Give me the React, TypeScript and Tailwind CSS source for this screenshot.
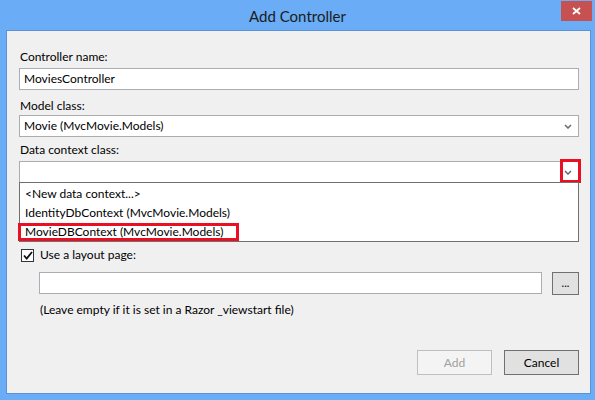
import React from "react";

const font = { fontFamily: 'Lato, "Noto Sans", sans-serif' };

const Chevron = () => (
  <svg width="8" height="5" viewBox="0 0 8 5" className="block">
    <path d="M1 1 L4 4 L7 1" fill="none" stroke="#6a6a6a" strokeWidth="1.5" />
  </svg>
);

const TextBox = ({ value, className = "" }: { value?: string; className?: string }) => (
  <div
    className={`h-[22px] border border-[#abadb3] bg-white pl-[4px] flex items-center text-[12px] text-[#000] ${className}`}
  >
    {value}
  </div>
);

const Select = ({ value }: { value?: string }) => (
  <div className="h-[22px] border border-[#acacac] bg-white pl-[4px] pr-[6px] flex items-center justify-between text-[12px] text-black">
    <span>{value}</span>
    <Chevron />
  </div>
);

export default function App() {
  return (
    <div
      className="w-[595px] h-[400px] bg-[#6aacf5] flex flex-col overflow-hidden select-none"
      style={font}
    >
      {/* title bar */}
      <div className="relative h-[30px] shrink-0 flex items-center justify-center">
        <span className="text-[15px] text-[#1b1b1b] mt-[3px]">Add Controller</span>
        <div className="absolute right-[3px] top-[1px] w-[31px] h-[20px] bg-[#c75050] flex items-center justify-center">
          <svg width="9" height="8" viewBox="0 0 9 8">
            <path d="M1 1 L8 7 M8 1 L1 7" stroke="#fff" strokeWidth="1.8" />
          </svg>
        </div>
      </div>

      {/* client area */}
      <div className="relative ml-[6px] mr-[4px] h-[364px] border border-[#5b92d6] bg-[#f0f0f0] pl-[12px] pr-[11px] pt-[18px] text-[12px] text-black leading-[16px]">
        <div className="pl-[1px]">Controller name:</div>
        <TextBox value="MoviesController" className="mt-[3px]" />

        <div className="pl-[1px] mt-[8px]">Model class:</div>
        <div className="mt-[1px]">
          <Select value="Movie (MvcMovie.Models)" />
        </div>

        <div className="pl-[1px] mt-[5px]">Data context class:</div>
        <div className="relative mt-[3px]">
          <Select />
          {/* highlight around the arrow */}
          <div className="absolute right-[-2px] top-[-2px] w-[21px] h-[24px] border-[3px] border-[#e81123]" />

          {/* open dropdown list */}
          <div className="absolute left-0 right-0 top-[21px] h-[60px] z-10 border border-[#707070] bg-white pt-[1px]">
            <div className="h-[19px] flex items-center pl-[5px]">&lt;New data context...&gt;</div>
            <div className="h-[19px] flex items-center pl-[5px]">IdentityDbContext (MvcMovie.Models)</div>
            <div className="relative h-[19px] flex items-center pl-[5px]">
              MovieDBContext (MvcMovie.Models)
              <div className="absolute left-[-2px] top-[1px] w-[221px] h-[18px] border-[3px] border-[#e81123]" />
            </div>
          </div>
        </div>

        <div className="mt-[65px] flex items-center pl-[2px] h-[14px]">
          <div className="w-[13px] h-[13px] border border-[#333] bg-white flex items-center justify-center">
            <svg width="10" height="9" viewBox="0 0 10 9">
              <path d="M1 4.5 L3.7 7.5 L9 1" fill="none" stroke="#111" strokeWidth="1.8" />
            </svg>
          </div>
          <span className="ml-[6px]">Use a layout page:</span>
        </div>

        <div className="mt-[10px] pl-[20px] flex">
          <TextBox className="flex-1" />
          <div className="ml-[10px] w-[27px] h-[23px] border border-[#707070] bg-[#e1e1e1] flex items-center justify-center text-[11px] leading-none pb-[3px]">
            ...
          </div>
        </div>
        <div className="pl-[21px] mt-[7px]">(Leave empty if it is set in a Razor _viewstart file)</div>

        <div className="mt-[32px] flex justify-end gap-[12px]">
          <div className="w-[75px] h-[25px] border border-[#bfbfbf] bg-[#f4f4f4] text-[#a0a0a0] flex items-center justify-center">
            Add
          </div>
          <div className="w-[75px] h-[25px] border border-[#707070] bg-[#e1e1e1] text-black flex items-center justify-center">
            Cancel
          </div>
        </div>
      </div>
    </div>
  );
}
